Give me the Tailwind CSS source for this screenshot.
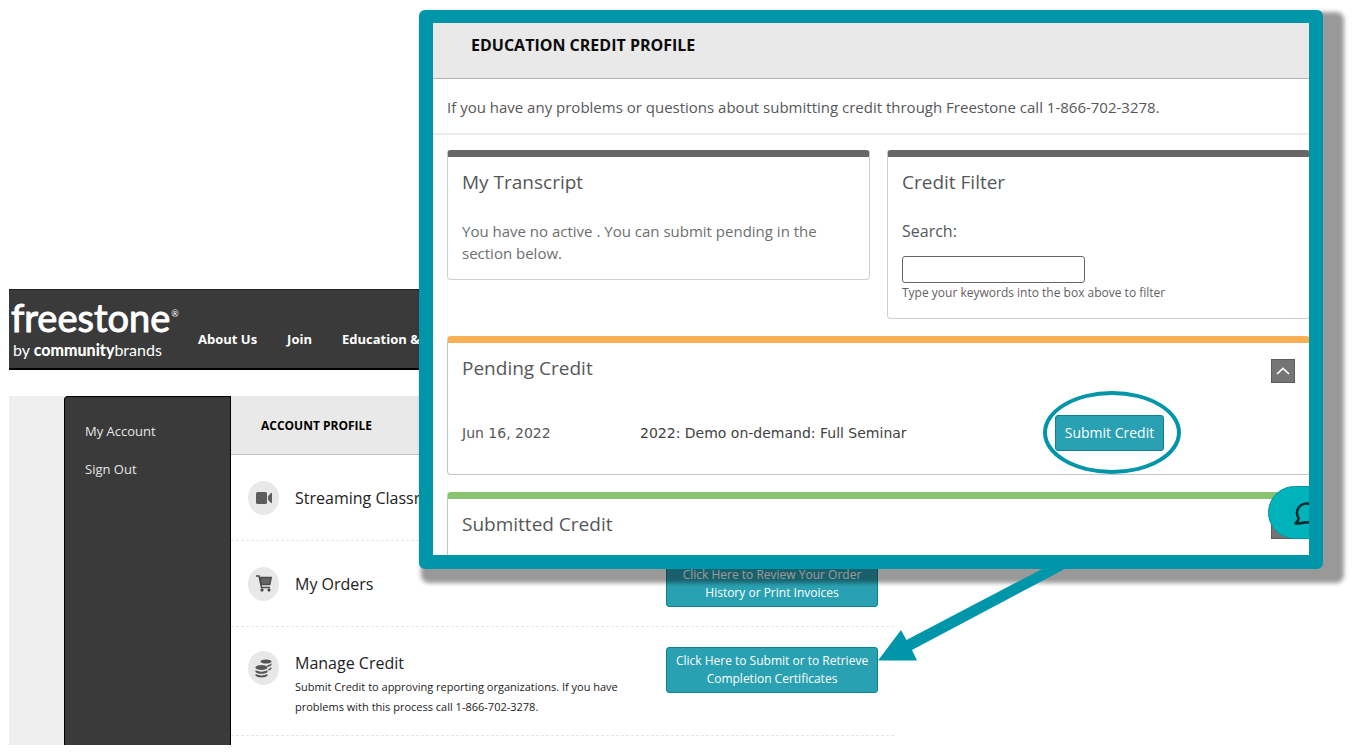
<!DOCTYPE html>
<html lang="en">
<head>
  <meta charset="UTF-8" />
  <meta name="viewport" content="width=device-width, initial-scale=1" />
  <title>Freestone - Education Credit Profile</title>
  <script src="https://cdn.jsdelivr.net/npm/@tailwindcss/browser@4"></script>
</head>
<body class="bg-white font-['Open_Sans','Noto_Sans',sans-serif]">
  <div class="relative flex flex-col min-h-screen overflow-hidden pt-[289px] pb-2 pl-[9px]">

    <!-- Site header -->
    <header class="flex h-[81px] mr-[463px] bg-[#3a3a3a] border-t border-[#222] border-b-2 border-b-black text-white">
      <a href="#" class="flex flex-col w-[189px] shrink-0 pl-0.5 pt-1 font-['Lato',sans-serif]">
        <span class="flex items-start text-[38px] leading-[46px] [-webkit-text-stroke:1px_white]">freestone<sup class="text-[9px] leading-4 top-3 ml-px [-webkit-text-stroke:0]">®</sup></span>
        <span class="flex items-start text-base leading-5 pl-0.5">by&nbsp;<b class="font-black">community</b>brands</span>
      </a>
      <nav class="flex gap-[30px] pt-[39px] text-[13px] leading-5 font-bold whitespace-nowrap">
        <a href="#">About Us</a>
        <a href="#">Join</a>
        <a href="#">Education &amp; Events</a>
      </nav>
    </header>

    <!-- Account page -->
    <div class="flex flex-1 mt-[26px] mr-[463px]">
      <div class="w-[55px] shrink-0 bg-[#efefef]"></div>
      <aside class="flex flex-col gap-[18px] w-[167px] shrink-0 pt-6 pl-5 rounded-tl bg-[#3a3a3a] border border-b-0 border-black text-[#e6e6e6] text-[13px] leading-5">
        <a href="#">My Account</a>
        <a href="#">Sign Out</a>
      </aside>
      <main class="flex-1 text-[#222]">
        <h1 class="h-[59px] pl-[30px] pt-5 bg-[#e9e9e9] border-b border-[#c4c4c4] text-xs leading-5 font-bold text-black">ACCOUNT PROFILE</h1>

        <div class="flex items-center gap-4 h-[86px] pl-[17px] pr-4 border-b border-dashed border-[#e8e8e8]">
          <span class="flex items-center justify-center w-[31px] h-[34px] rounded-[50%] bg-[#e8e8e8]">
            <svg class="w-4 h-3" viewBox="0 0 16 12" fill="#5d5d5d"><rect x="0" y="0" width="11" height="12" rx="1.5" /><path d="M12 4.200 15 1Q16 .5 16 1.600V10.400Q16 11.500 15 11L12 7.800Z" /></svg>
          </span>
          <h2 class="text-base whitespace-nowrap">Streaming Classroom</h2>
        </div>

        <div class="flex items-center gap-4 h-[86px] pl-[17px] pr-4 border-b border-dashed border-[#e8e8e8]">
          <span class="flex items-center justify-center w-[31px] h-[34px] rounded-[50%] bg-[#e8e8e8]">
            <svg class="w-4 h-[17px]" viewBox="0 0 16 17" fill="none" stroke="#4c4c4c" stroke-width="1.500"><path d="M4 2.500H15.200L13.800 9.500H5.300Z" fill="#666" /><path d="M0 1H3L5.500 12.500H14" /><circle cx="6" cy="15" r="1.200" fill="#4c4c4c" stroke-width="1" /><circle cx="13" cy="15" r="1.200" fill="#4c4c4c" stroke-width="1" /></svg>
          </span>
          <h2 class="flex-1 text-base">My Orders</h2>
          <button type="button" class="w-[212px] h-[47px] rounded-[3px] border border-[#0d8290] bg-[#29a1b2] text-xs leading-[18px] text-white">Click Here to Review Your Order<br />History or Print Invoices</button>
        </div>

        <div class="flex items-start gap-4 h-[109px] pl-[17px] pr-4 pt-5 border-b border-dashed border-[#e8e8e8]">
          <span class="flex items-center justify-center w-[31px] h-[34px] mt-1 rounded-[50%] bg-[#e8e8e8]">
            <svg class="w-[17px] h-[19px]" viewBox="0 0 17 19" fill="#555"><ellipse cx="11" cy="2.500" rx="5.500" ry="2" /><path d="M12 6.500Q15.500 5.800 16.500 4.300V6Q15.500 7.500 12.800 8ZM13.300 10Q15.600 9.300 16.500 8V9.700Q15.500 11 13.300 11.600Z" /><ellipse cx="6.500" cy="8.500" rx="6" ry="2.600" /><path d="M.5 11.300Q6.500 14.200 12.500 11.300V13Q11 14.800 6.500 14.800T.5 13ZM.5 15Q6.500 17.800 12.500 15V16.600Q11 18.500 6.500 18.500T.5 16.600Z" /></svg>
          </span>
          <div class="flex-1 pt-1">
            <h2 class="text-base">Manage Credit</h2>
            <p class="mt-0.5 text-[11px] leading-5 whitespace-nowrap">Submit Credit to approving reporting organizations. If you have<br />problems with this process call 1-866-702-3278.</p>
          </div>
          <button type="button" class="w-[212px] h-[46px] rounded-[3px] border border-[#0d8290] bg-[#29a1b2] text-xs leading-[18px] text-white">Click Here to Submit or to Retrieve<br />Completion Certificates</button>
        </div>
      </main>
    </div>

    <!-- Callout: shadow, then framed panel -->
    <div class="absolute left-[421px] right-[13px] top-[12px] h-[571px] rounded-lg bg-black/40 blur-[2px]"></div>
    <section class="absolute left-[419px] right-[34px] top-[10px] h-[559px] rounded-md border-[14px] border-t-[13px] border-[#0096aa] bg-[#0096aa]">
      <div class="relative h-full overflow-hidden bg-white text-[#55585a]">
        <h2 class="h-[56px] pl-[38px] pt-3 bg-[#e9e9e9] border-b border-[#b4b4b4] text-base leading-5 font-bold text-[#0c0c0c]">EDUCATION CREDIT PROFILE</h2>
        <p class="h-[56px] pl-[14px] pt-4 border-b-2 border-[#ebebeb] text-[15px] leading-6 whitespace-nowrap">If you have any problems or questions about submitting credit through Freestone call 1-866-702-3278.</p>

        <div class="flex flex-col gap-[17px] pt-[15px] pl-[14px] -mr-px">
          <div class="grid grid-cols-2 items-start gap-[17px]">
            <div class="h-[130px] px-[14px] pt-3 rounded-sm border border-[#cfcfcf] border-t-[7px] border-t-[#666868]">
              <h3 class="text-[19px] leading-[26px]">My Transcript</h3>
              <p class="mt-[25px] text-[15px] leading-[22px] text-[#6d6f71]">You have no active . You can submit pending in the section below.</p>
            </div>
            <div class="h-[169px] px-[14px] pt-3 rounded-sm border border-[#cfcfcf] border-t-[7px] border-t-[#666868]">
              <h3 class="text-[19px] leading-[26px]">Credit Filter</h3>
              <label for="search" class="block mt-[25px] text-base leading-[22px]">Search:</label>
              <input id="search" type="text" class="block mt-3.5 w-[183px] h-[27px] px-2 rounded-[3px] border border-[#666] bg-white text-sm" />
              <p class="mt-0.5 text-xs leading-4 text-[#5f6163]">Type your keywords into the box above to filter</p>
            </div>
          </div>

          <div class="h-[139px] px-[14px] pt-3 rounded-sm border border-[#c4c4c4] border-t-[7px] border-t-[#f9b055]">
            <div class="flex justify-between">
              <h3 class="text-[19px] leading-[26px]">Pending Credit</h3>
              <button type="button" aria-label="Collapse pending credit" class="flex items-center justify-center w-6 h-6 mt-1 border border-[#5c5c5c] bg-[#757575]">
                <svg class="w-3.5 h-2" viewBox="0 0 14 8" fill="none" stroke="#fff" stroke-width="1.700"><path d="M1 7 7 1.300 13 7" /></svg>
              </button>
            </div>
            <table class="w-full mt-8 table-fixed font-['DejaVu_Sans',sans-serif] text-sm leading-5">
              <tr>
                <td class="w-[178px]">Jun 16, 2022</td>
                <td class="w-[415px] text-[#3f4142]">2022: Demo on-demand: Full Seminar</td>
                <td>
                  <div class="relative w-[109px]">
                    <button type="button" class="block w-full h-9 rounded-[3px] border border-[#0d8290] bg-[#29a1b2] font-['Open_Sans',sans-serif] text-sm text-white">Submit Credit</button>
                    <span class="absolute -left-3 -right-[17px] -top-6 -bottom-[23px] rounded-[50%] border-4 border-[#0096aa] pointer-events-none"></span>
                  </div>
                </td>
              </tr>
            </table>
          </div>

          <div class="h-[139px] px-[14px] pt-3 rounded-sm border border-[#c4c4c4] border-t-[7px] border-t-[#88c370]">
            <div class="flex justify-between">
              <h3 class="text-[19px] leading-[26px]">Submitted Credit</h3>
              <button type="button" aria-label="Collapse submitted credit" class="w-6 h-6 mt-1 border border-[#5c5c5c] bg-[#757575]"></button>
            </div>
          </div>
        </div>

        <!-- Chat launcher -->
        <button type="button" aria-label="Open chat" class="absolute -right-[59px] bottom-4 w-[100px] h-[53px] pl-[25px] rounded-full border border-[#0496a0] bg-[#00b2ba]">
          <svg class="w-6 h-6" viewBox="0 0 24 24" fill="none" stroke="#10282c" stroke-width="2.500" stroke-linejoin="round"><path d="M4.500 17A10 9.500 0 1 1 11 21.300Q6 23 1.500 22.300 4.500 20.500 4.500 17Z" /></svg>
        </button>
      </div>
    </section>

    <!-- Arrow from the panel to the Manage Credit button -->
    <svg class="absolute right-[289px] top-[568px] w-[190px] h-[95px]" viewBox="0 0 190 95" fill="#0096aa"><path d="M0 92.500 23 62 28.500 72 166 0H188L183 3 34 82 39 92.500Z" /></svg>
  </div>
</body>
</html>
